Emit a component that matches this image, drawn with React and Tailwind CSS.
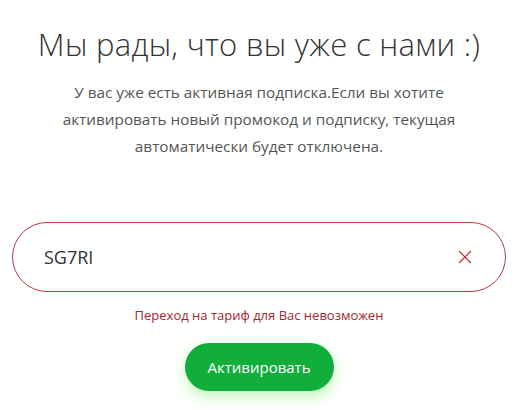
import { X } from "lucide-react";

export default function App() {
  return (
    <div className="min-h-screen bg-white flex flex-col items-center px-3 pt-[22px] font-['Open_Sans',sans-serif]">
      <h1 className="text-[31px] leading-[44px] font-light text-[#333] tracking-[0.3px]">
        Мы рады, что вы уже с нами :)
      </h1>
      <p className="mt-[13px] w-[440px] text-center text-[15.3px] leading-[27px] text-[#555]">
        У вас уже есть активная подписка.Если вы хотите активировать новый
        промокод и подписку, текущая автоматически будет отключена.
      </p>

      <div className="mt-[62px] w-full h-[70px] rounded-full border border-[#b8393f] flex items-center pl-[31px] pr-[29px]">
        <input
          defaultValue="SG7RI"
          className="flex-1 outline-none bg-transparent text-[18px] text-[#333] font-normal"
        />
        <button className="text-[#c0343c]">
          <X size={22} strokeWidth={1.4} />
        </button>
      </div>

      <p className="mt-[14px] text-[13px] leading-[18px] text-[#a3282e]">
        Переход на тариф для Вас невозможен
      </p>

      <button className="mt-[19px] w-[149px] h-[48px] rounded-full bg-[#12ae3b] text-white text-[15px] font-medium shadow-[0_6px_14px_rgba(80,230,60,0.35)]">
        Активировать
      </button>
    </div>
  );
}
